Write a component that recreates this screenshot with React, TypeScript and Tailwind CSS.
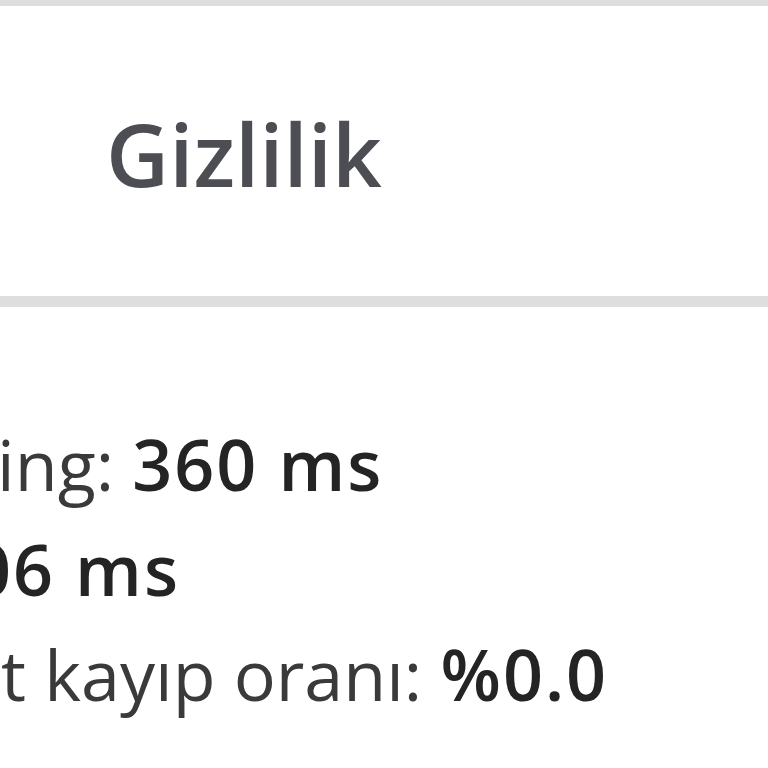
export default function App() {
  return (
    <div className="h-[768px] w-full overflow-hidden bg-white font-['Open_Sans',sans-serif] blur-[0.6px]">
      <div className="h-[6px] bg-[#dedede]" />
      <div className="h-[290px] pl-[106px] pt-[104px]">
        <span className="text-[87px] font-semibold leading-none text-[#4d4e53]">Gizlilik</span>
      </div>
      <div className="h-[11px] bg-[#dedede]" />
      <div className="pt-[105px] text-[70px] leading-[105px] text-[#3a3a3a]">
        <div className="-ml-[45px] whitespace-nowrap">
          Ping: <span className="font-semibold tracking-[2px] text-[#242424]">360 ms</span>
        </div>
        <div className="-ml-[262px] whitespace-nowrap">
          Jitter: <span className="font-semibold tracking-[2px] text-[#242424]">106 ms</span>
        </div>
        <div className="-ml-[156px] whitespace-nowrap">
          Paket kayıp oranı: <span className="font-semibold tracking-[2px] text-[#242424]">%0.0</span>
        </div>
      </div>
    </div>
  );
}
